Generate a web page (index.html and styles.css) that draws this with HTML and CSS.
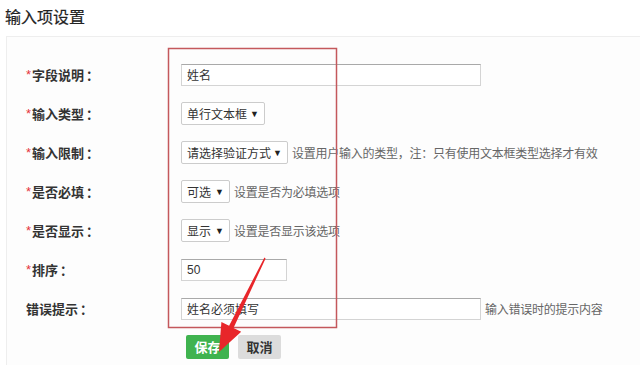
FILE: index.html
```html
<!DOCTYPE html>
<html lang="zh-CN">
<head>
  <meta charset="UTF-8" />
  <meta name="viewport" content="width=device-width, initial-scale=1.0"/>
  <title>输入项设置</title>
  <link rel="stylesheet" href="styles.css">
</head>
<body>
  <h2 class="title">输入项设置</h2>

  <div class="panel">
    <div class="form">
      <div class="label"><span class="req">*</span>字段说明<span class="colon">：</span></div>
      <div class="field"><span class="input wide">姓名</span></div>

      <div class="label"><span class="req">*</span>输入类型<span class="colon">：</span></div>
      <div class="field"><span class="select w84">单行文本框<i class="caret">▼</i></span></div>

      <div class="label"><span class="req">*</span>输入限制<span class="colon">：</span></div>
      <div class="field"><span class="select w107">请选择验证方式<i class="caret">▼</i></span><span class="hint">设置用户输入的类型，注：只有使用文本框类型选择才有效</span></div>

      <div class="label"><span class="req">*</span>是否必填<span class="colon">：</span></div>
      <div class="field"><span class="select w49">可选<i class="caret">▼</i></span><span class="hint">设置是否为必填选项</span></div>

      <div class="label"><span class="req">*</span>是否显示<span class="colon">：</span></div>
      <div class="field"><span class="select w49">显示<i class="caret">▼</i></span><span class="hint">设置是否显示该选项</span></div>

      <div class="label"><span class="req">*</span>排序<span class="colon">：</span></div>
      <div class="field"><span class="input short">50</span></div>

      <div class="label">错误提示<span class="colon">：</span></div>
      <div class="field"><span class="input wide">姓名必须填写</span><span class="hint">输入错误时的提示内容</span></div>

      <div class="label"></div>
      <div class="field actions">
        <button class="btn save">保存</button>
        <button class="btn cancel">取消</button>
      </div>
    </div>
  </div>

  <!-- annotation drawn over the form -->
  <svg class="mark" width="640" height="366" viewBox="0 0 640 366">
    <rect x="168.5" y="48.5" width="168" height="279" fill="none" stroke="#c4585c" stroke-width="1.5"/>
    <polygon fill="#e8262a" points="219,352 241.2,331.7 233.5,328 265.6,258.4 264.4,257.6 229.1,325.8 221.4,322.1"/>
  </svg>
</body>
</html>
```

FILE: styles.css
```css
body {
  margin: 0;
  position: relative;
  width: 640px;
  height: 366px;
  overflow: hidden;
  background: #fff;
  color: #333;
  font-family: "Liberation Sans", "Noto Sans CJK SC", sans-serif;
}
.title {
  margin: 0;
  padding: 7px 0 0 5px;
  height: 29px;
  font-size: 16px;
  font-weight: normal;
  line-height: 22px;
  color: #222;
  -webkit-text-stroke: 0.2px #222;
}
.panel {
  margin-left: 6px;
  border: 1px solid #eee;
  border-right: none;
  border-bottom: none;
  background: #fdfdfd;
  height: 310px;
  padding: 18px 0 0 19px;
}
.form {
  display: grid;
  grid-template-columns: 155px 1fr;
  grid-auto-rows: 39px;
}
.label {
  display: flex;
  align-items: center;
  font-size: 13px;
  font-weight: bold;
  color: #333;
}
.colon {
  display: inline-block;
  width: 13px;
  margin-left: 2px;
  text-align: center;
}
.req {
  color: #e5333a;
  font-weight: normal;
  margin-right: 1px;
}
.field {
  display: flex;
  align-items: center;
  gap: 4px;
}
.input, .select {
  box-sizing: border-box;
  height: 22px;
  display: flex;
  align-items: center;
  padding: 0 5px;
  background: #fff;
  border: 1px solid #d4d4d4;
  border-top-color: #a9a9a9;
  font-size: 12px;
  color: #333;
}
.wide { width: 300px; }
.short { width: 106px; }
.select {
  justify-content: space-between;
  border: 1px solid #ccc;
  border-radius: 2px;
  height: 23px;
}
.w84 { width: 84px; }
.w107 { width: 107px; }
.w49 { width: 49px; }
.caret {
  font-style: normal;
  font-size: 9px;
  color: #222;
}
.hint {
  font-size: 12px;
  letter-spacing: -0.25px;
  color: #666;
}
.actions {
  gap: 9px;
  padding-left: 5px;
  padding-bottom: 2px;
}
.btn {
  width: 43px;
  height: 24px;
  border: none;
  border-radius: 2px;
  font-size: 13px;
  font-weight: bold;
  font-family: "Noto Sans CJK SC", sans-serif;
  padding: 0;
}
.save {
  background: #3fb34f;
  color: #fff;
}
.cancel {
  background: #dcdcdc;
  color: #333;
}
.mark {
  position: absolute;
  left: 0;
  top: 0;
  pointer-events: none;
}
```
